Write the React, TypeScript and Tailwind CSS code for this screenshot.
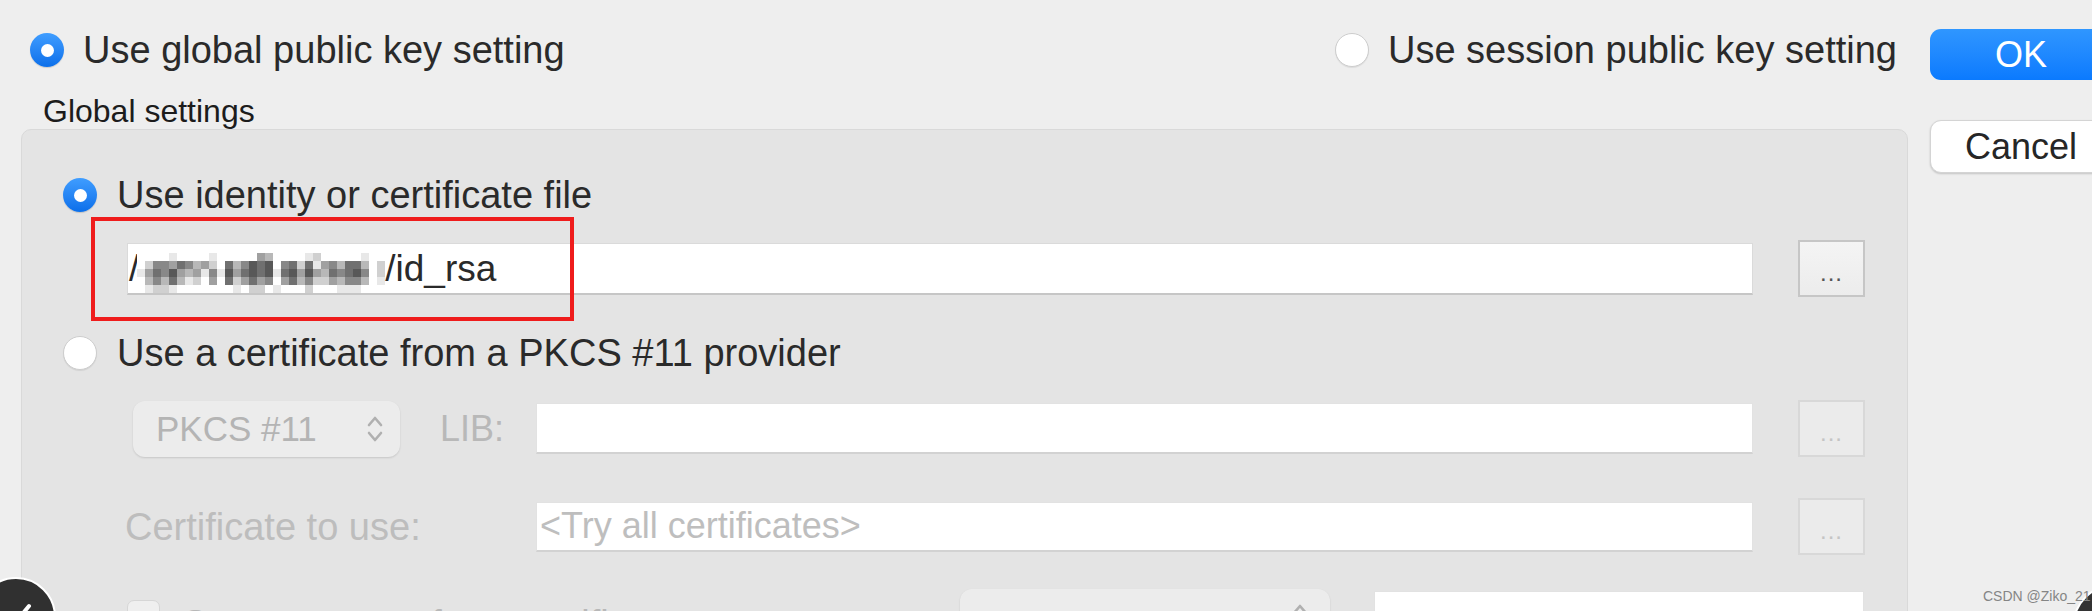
import React from "react";

const MOSAIC = [
  "9999899998999995699998799999899",
  "9744534657936423294373854633697",
  "8534256584825323283252563432497",
  "9646368795937535495364775644698",
  "9877899999998977989997999888999",
];

function Radio({ checked = false }: { checked?: boolean }) {
  if (checked) {
    return (
      <span className="flex size-[34px] shrink-0 items-center justify-center rounded-full bg-linear-to-b from-[#3f9dff] to-[#0a6fea] shadow-[0_1px_1px_rgba(0,0,0,0.15)]">
        <span className="size-[13px] rounded-full bg-white" />
      </span>
    );
  }
  return (
    <span className="size-[34px] shrink-0 rounded-full border border-[#cdcdcd] bg-white shadow-[0_1px_1px_rgba(0,0,0,0.08)]" />
  );
}

function DotsButton({ disabled = false }: { disabled?: boolean }) {
  return (
    <div
      className={`ml-[45px] flex h-[57px] w-[67px] shrink-0 items-center justify-center border-2 ${
        disabled
          ? "border-[#d8d8d8] bg-[#ebebeb] text-[#c4c4c4]"
          : "border-[#c6c6c6] bg-linear-to-b from-[#f4f4f4] to-[#ececec] text-[#555555]"
      }`}
    >
      <span className="mt-[8px] text-[24px] leading-none tracking-[1px]">...</span>
    </div>
  );
}

function UpDown({ color = "#b0b0b0" }: { color?: string }) {
  return (
    <svg width="18" height="30" viewBox="0 0 18 30" fill="none">
      <path d="M3 11 L9 4 L15 11" stroke={color} strokeWidth="2.6" strokeLinecap="round" strokeLinejoin="round" />
      <path d="M3 19 L9 26 L15 19" stroke={color} strokeWidth="2.6" strokeLinecap="round" strokeLinejoin="round" />
    </svg>
  );
}

function Mosaic() {
  return (
    <svg width="248" height="40" viewBox="0 0 248 40" className="-ml-[2px] shrink-0 self-end">
      {MOSAIC.map((row, r) =>
        row.split("").map((d, c) => {
          const v = Math.min(255, 40 + Number(d) * 24);
          return <rect key={`${r}-${c}`} x={c * 8} y={r * 8} width="8" height="8" fill={`rgb(${v},${v},${v})`} />;
        })
      )}
    </svg>
  );
}

export default function App() {
  return (
    <div className="relative h-[611px] w-[2092px] overflow-hidden bg-[#eeeeee] text-[#2a2a2a] [font-family:'Liberation_Sans',Arial,sans-serif]">
      <div className="flex">
        {/* left: options + group box */}
        <div className="w-[1908px] shrink-0 pl-[21px]">
          <div className="flex items-center justify-between pl-[9px] pr-[11px] pt-[31px]">
            <div className="flex items-center gap-[19px]">
              <Radio checked />
              <span className="text-[38px] leading-none">Use global public key setting</span>
            </div>
            <div className="flex items-center gap-[19px]">
              <Radio />
              <span className="text-[38px] leading-none">Use session public key setting</span>
            </div>
          </div>

          <div className="ml-[22px] mt-[26px] text-[32px] leading-none text-[#1c1c1c]">Global settings</div>

          <div className="mt-[2px] h-[520px] rounded-[10px] border border-[#d9d9d9] bg-[#e4e4e4] pl-[41px] pr-[42px] pt-[46px]">
            <div className="flex items-center gap-[20px]">
              <Radio checked />
              <span className="text-[38px] leading-none">Use identity or certificate file</span>
            </div>

            <div className="mt-[26px] flex h-[57px] items-center">
              <div className="ml-[64px] flex h-[52px] flex-1 items-center border border-[#dadada] border-b-2 border-b-[#c6c6c6] bg-white pl-[1px]">
                <span className="text-[37px] leading-none">/</span>
                <Mosaic />
                <span className="text-[37px] leading-none">/id_rsa</span>
              </div>
              <DotsButton />
            </div>

            <div className="mt-[37px] flex items-center gap-[20px]">
              <Radio />
              <span className="text-[38px] leading-none">Use a certificate from a PKCS #11 provider</span>
            </div>

            <div className="mt-[28px] flex h-[57px] items-center">
              <div className="ml-[70px] flex w-[403px] shrink-0 items-center">
                <div className="flex h-[56px] w-[267px] items-center justify-between rounded-[12px] bg-[#ececec] pl-[23px] pr-[16px] shadow-[0_1px_2px_rgba(0,0,0,0.13)]">
                  <span className="text-[35px] leading-none text-[#b4b4b4]">PKCS #11</span>
                  <UpDown />
                </div>
                <span className="ml-[40px] text-[36px] leading-none text-[#b8b8b8]">LIB:</span>
              </div>
              <div className="h-[51px] flex-1 border border-[#e2e2e2] border-b-2 border-b-[#d2d2d2] bg-white" />
              <DotsButton disabled />
            </div>

            <div className="mt-[41px] flex h-[57px] items-center">
              <span className="ml-[62px] w-[411px] shrink-0 text-[38px] leading-none text-[#bdbdbd]">Certificate to use:</span>
              <div className="flex h-[50px] flex-1 items-center border border-[#e2e2e2] border-b-2 border-b-[#d2d2d2] bg-white pl-[3px]">
                <span className="text-[36px] leading-none text-[#bebebe]">&lt;Try all certificates&gt;</span>
              </div>
              <DotsButton disabled />
            </div>

            <div className="mt-[33px] flex h-[57px] items-center">
              <div className="ml-[64px] flex w-[833px] shrink-0 items-center">
                <span className="size-[33px] shrink-0 rounded-[7px] border border-[#d6d6d6] bg-[#efefef]" />
                <span className="ml-[20px] mt-[14px] text-[38px] leading-none text-[#b8b8b8]">Get username from certificate</span>
              </div>
              <div className="flex h-[56px] w-[370px] shrink-0 items-center justify-between rounded-[12px] bg-[#ececec] pl-[27px] pr-[21px] shadow-[0_1px_2px_rgba(0,0,0,0.13)]">
                <span className="mt-[14px] text-[35px] leading-none text-[#b4b4b4]">Common Name</span>
                <UpDown />
              </div>
              <div className="ml-[44px] h-[51px] w-[490px] shrink-0 border border-[#e2e2e2] bg-white" />
            </div>
          </div>
        </div>

        {/* right: dialog buttons */}
        <div className="ml-[22px] flex w-[182px] shrink-0 flex-col gap-[40px] pt-[29px]">
          <button className="flex h-[51px] items-center justify-center rounded-[11px] bg-linear-to-b from-[#2f96ff] to-[#0a7afe] text-[36px] leading-none text-white">
            OK
          </button>
          <button className="flex h-[53px] items-center justify-center rounded-[11px] border border-[#d4d4d4] bg-white text-[36px] leading-none text-[#262626] shadow-[0_1px_2px_rgba(0,0,0,0.18)]">
            Cancel
          </button>
        </div>
      </div>

      {/* annotation + screenshot overlays */}
      <div className="absolute left-[91px] top-[217px] h-[104px] w-[483px] border-[4px] border-[#ef1c1c]" />

      <div className="absolute left-[-24px] top-[577px] size-[80px] rounded-full border-2 border-white bg-[#303030]">
        <svg className="absolute inset-0" width="76" height="76" viewBox="0 0 76 76" fill="none">
          <path d="M51 27 L37 44 L51 61" stroke="white" strokeWidth="4" strokeLinecap="round" strokeLinejoin="round" />
        </svg>
      </div>

      <div className="absolute left-[2072px] top-[583px] size-[90px] rounded-full border-2 border-white bg-[#333333]" />
      <div className="absolute left-[1983px] top-[589px] whitespace-nowrap text-[14px] leading-none text-[#858585]">CSDN @Ziko_21</div>
    </div>
  );
}
